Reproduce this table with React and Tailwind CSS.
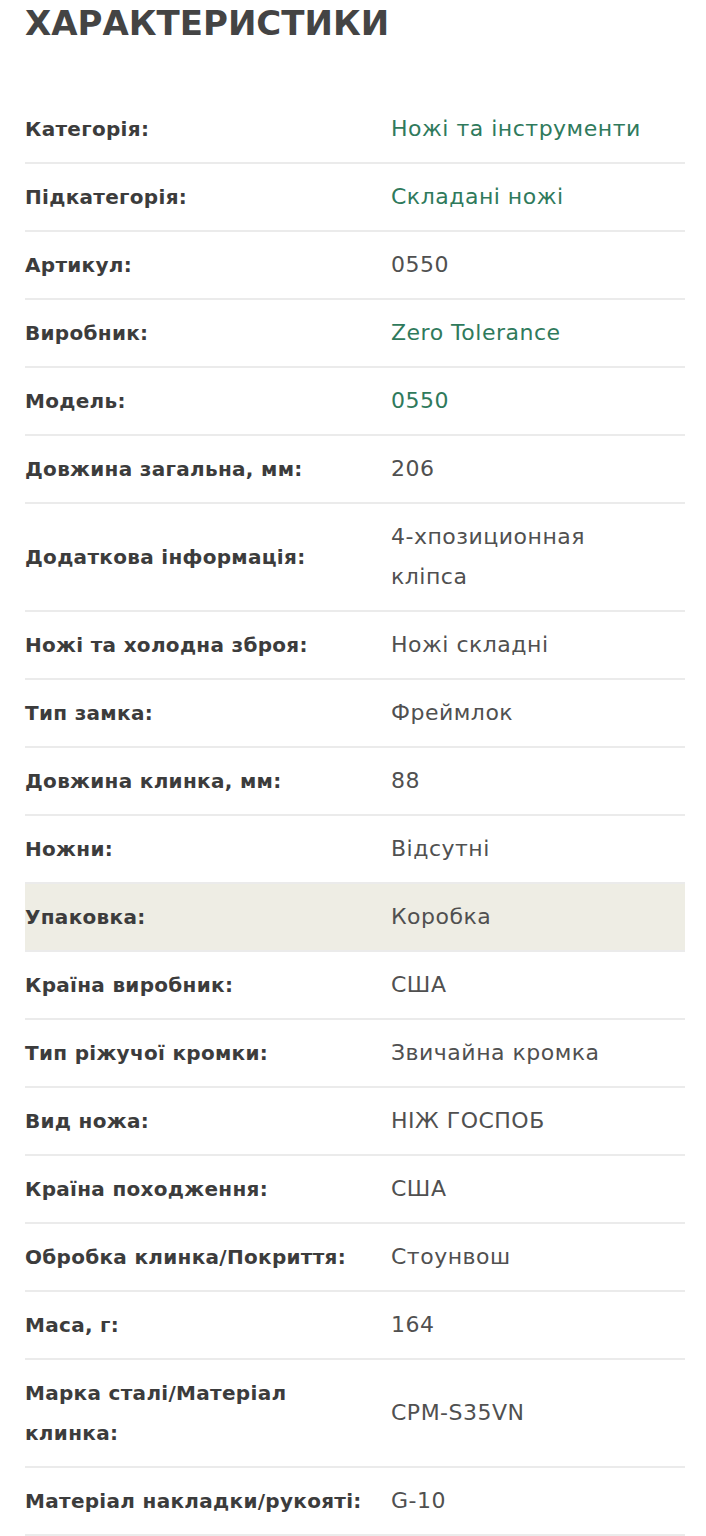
const rows = [
  { label: 'Категорія:', value: 'Ножі та інструменти', link: true },
  { label: 'Підкатегорія:', value: 'Складані ножі', link: true },
  { label: 'Артикул:', value: '0550' },
  { label: 'Виробник:', value: 'Zero Tolerance', link: true },
  { label: 'Модель:', value: '0550', link: true },
  { label: 'Довжина загальна, мм:', value: '206' },
  { label: 'Додаткова інформація:', value: '4-хпозиционная\nкліпса' },
  { label: 'Ножі та холодна зброя:', value: 'Ножі складні' },
  { label: 'Тип замка:', value: 'Фреймлок' },
  { label: 'Довжина клинка, мм:', value: '88' },
  { label: 'Ножни:', value: 'Відсутні' },
  { label: 'Упаковка:', value: 'Коробка', active: true },
  { label: 'Країна виробник:', value: 'США' },
  { label: 'Тип ріжучої кромки:', value: 'Звичайна кромка' },
  { label: 'Вид ножа:', value: 'НІЖ ГОСПОБ' },
  { label: 'Країна походження:', value: 'США' },
  { label: 'Обробка клинка/Покриття:', value: 'Стоунвош' },
  { label: 'Маса, г:', value: '164' },
  { label: 'Марка сталі/Матеріал клинка:', value: 'CPM-S35VN' },
  { label: 'Матеріал накладки/рукояті:', value: 'G-10' },
]

export default function App() {
  return (
    <div className="bg-white min-h-screen pl-[25px] pr-[21px] pt-[3px] font-['DejaVu_Sans',_sans-serif]">
      {/* Heading */}
      <h2 className="text-[34px] leading-[40px] font-bold text-[#444] uppercase">
        Характеристики
      </h2>

      {/* Specs table */}
      <div className="mt-[53px]">
        {rows.map(({ label, value, link, active }, i) => (
          <div
            key={i}
            className={`flex items-center py-[13px] border-b-2 border-[#ebebeb] ${
              active ? 'bg-[#eeede4]' : ''
            } ${i === rows.length - 1 ? 'border-b-0' : ''}`}
          >
            <div className="w-[366px] shrink-0 pr-3 text-[20px] leading-[40px] tracking-[0.3px] font-bold text-[#3c3c3c]">
              {label}
            </div>
            <div
              className={`flex-1 whitespace-pre-line text-[22px] leading-[40px] tracking-[0.5px] ${
                link ? 'text-[#2f7a5c]' : 'text-[#505050]'
              }`}
            >
              {value}
            </div>
          </div>
        ))}
      </div>
    </div>
  )
}
